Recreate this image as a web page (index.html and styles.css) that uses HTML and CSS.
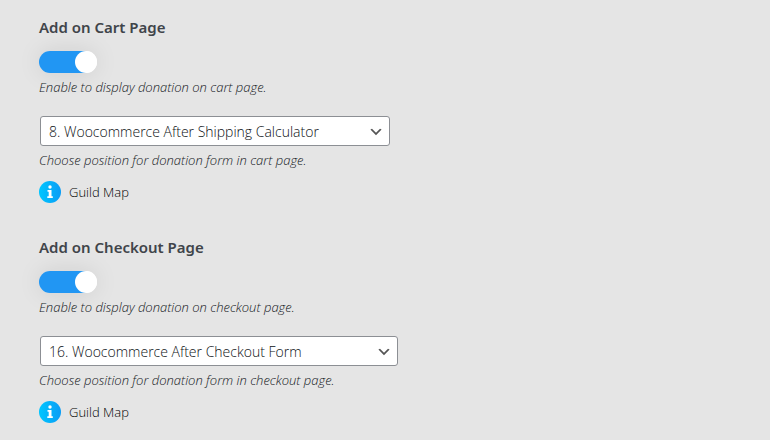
FILE: index.html
```html
<!DOCTYPE html>
<html lang="en">
<head>
    <meta charset="UTF-8">
    <meta name="viewport" content="width=device-width, initial-scale=1.0">
    <title>Donation Settings</title>
    <link rel="stylesheet" href="styles.css">
</head>
<body>
    <form class="settings">
        <section class="setting">
            <h2><label for="cart-toggle">Add on Cart Page</label></h2>
            <label class="switch">
                <input type="checkbox" id="cart-toggle" checked>
                <span class="slider"></span>
            </label>
            <p class="description">Enable to display donation on cart page.</p>
            <div class="select-wrap">
                <select id="cart-position" aria-label="Cart page position">
                    <option>8. Woocommerce After Shipping Calculator</option>
                </select>
                <svg class="arrow" viewBox="0 0 20 20" aria-hidden="true"><path d="M5 6l5 5 5-5 2 1-7 7-7-7 2-1z"/></svg>
            </div>
            <p class="description">Choose position for donation form in cart page.</p>
            <a class="guild-map" href="#">
                <svg class="info" viewBox="0 0 22 22" aria-hidden="true">
                    <defs>
                        <linearGradient id="info-cart" x1="0" y1="0" x2="1" y2="0">
                            <stop offset="0" stop-color="#00c6ff"/>
                            <stop offset="1" stop-color="#0a9cf5"/>
                        </linearGradient>
                    </defs>
                    <circle cx="11" cy="11" r="11" fill="url(#info-cart)"/>
                    <circle cx="11" cy="6" r="1.7" fill="#fff"/>
                    <path d="M8.5 9h4v6.2h1.3V17H8.3v-1.8h1.4v-4.4H8.5z" fill="#fff"/>
                </svg>
                Guild Map
            </a>
        </section>

        <section class="setting">
            <h2><label for="checkout-toggle">Add on Checkout Page</label></h2>
            <label class="switch">
                <input type="checkbox" id="checkout-toggle" checked>
                <span class="slider"></span>
            </label>
            <p class="description">Enable to display donation on checkout page.</p>
            <div class="select-wrap wide">
                <select id="checkout-position" aria-label="Checkout page position">
                    <option>16. Woocommerce After Checkout Form</option>
                </select>
                <svg class="arrow" viewBox="0 0 20 20" aria-hidden="true"><path d="M5 6l5 5 5-5 2 1-7 7-7-7 2-1z"/></svg>
            </div>
            <p class="description">Choose position for donation form in checkout page.</p>
            <a class="guild-map" href="#">
                <svg class="info" viewBox="0 0 22 22" aria-hidden="true">
                    <defs>
                        <linearGradient id="info-checkout" x1="0" y1="0" x2="1" y2="0">
                            <stop offset="0" stop-color="#00c6ff"/>
                            <stop offset="1" stop-color="#0a9cf5"/>
                        </linearGradient>
                    </defs>
                    <circle cx="11" cy="11" r="11" fill="url(#info-checkout)"/>
                    <circle cx="11" cy="6" r="1.7" fill="#fff"/>
                    <path d="M8.5 9h4v6.2h1.3V17H8.3v-1.8h1.4v-4.4H8.5z" fill="#fff"/>
                </svg>
                Guild Map
            </a>
        </section>
    </form>
</body>
</html>
```
FILE: styles.css
```css
* {
    box-sizing: border-box;
}

body {
    margin: 0;
    background-color: #e5e5e5;
    color: #3c434a;
    font-family: "Open Sans", "Noto Sans", sans-serif;
    font-size: 13px;
}

.settings {
    display: flex;
    flex-direction: column;
    gap: 33px;
    padding: 16px 39px 0;
}

.setting {
    display: flex;
    flex-direction: column;
    align-items: flex-start;
}

h2 {
    margin: 0 0 12px;
    color: #40444a;
    font-family: "Noto Sans", "Open Sans", sans-serif;
    font-size: 15px;
    font-weight: 600;
    line-height: 23px;
}

.switch {
    position: relative;
    display: block;
    width: 58px;
    height: 22px;
    cursor: pointer;
}

.switch input {
    position: absolute;
    opacity: 0;
    margin: 0;
}

.slider {
    display: block;
    height: 22px;
    background-color: #ccc;
    border-radius: 11px;
    box-shadow: 0 0 25px rgba(0, 0, 0, 0.1);
}

.slider::before {
    content: "";
    position: absolute;
    left: 0;
    top: 0;
    width: 22px;
    height: 22px;
    background-color: white;
    border-radius: 50%;
    transition: left 0.3s ease;
}

/* white under the knob, so no blue shows round its edge */
.switch input:checked + .slider {
    background: linear-gradient(to right, #2196f3 47px, white 47px);
}

.switch input:checked + .slider::before {
    left: 36px;
}

.description {
    margin: 4px 0 0;
    color: #14181c;
    font-size: 13px;
    font-style: italic;
    font-weight: 320;
    line-height: 21px;
}

.select-wrap {
    position: relative;
    width: 350px;
    max-width: 100%;
    margin: 18px 0 0 1px;
}

.select-wrap.wide {
    width: 358px;
}

select {
    display: block;
    width: 100%;
    height: 30px;
    padding: 0 24px 0 8px;
    border: 1px solid #8c8f94;
    border-radius: 3px;
    background-color: white;
    color: #0c1014;
    font-family: inherit;
    font-size: 14px;
    font-weight: 320;
    appearance: none;
    cursor: pointer;
}

.arrow {
    position: absolute;
    right: 6px;
    top: 8px;
    width: 16px;
    height: 16px;
    fill: #555;
    pointer-events: none;
}

.guild-map {
    display: flex;
    align-items: center;
    gap: 8px;
    margin-top: 10px;
    color: black;
    font-weight: 350;
    line-height: 22px;
    text-decoration: none;
}

.info {
    width: 22px;
    height: 22px;
}
```
